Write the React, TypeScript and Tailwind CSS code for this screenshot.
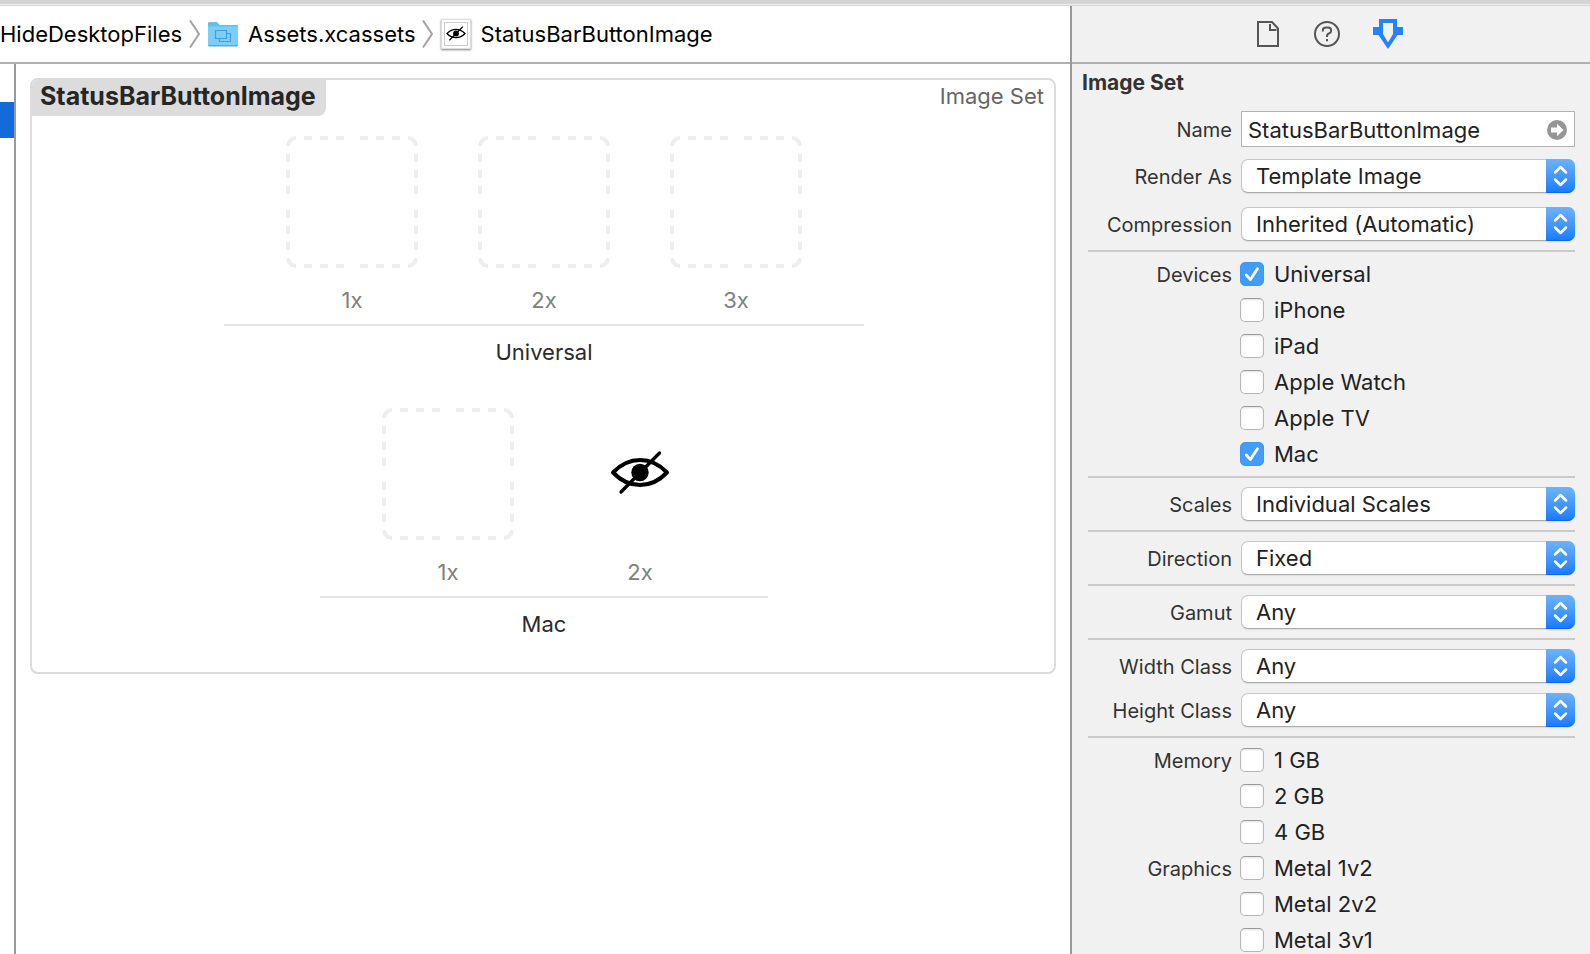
import { Fragment, useId, type ReactNode } from "react";

function PathChevron() {
  return (
    <svg width="12" height="28" viewBox="0 0 12 28" fill="none" stroke="#a3a3a3" strokeWidth="2" aria-hidden="true">
      <path d="M1 0.5L10 14L1 27.5" />
    </svg>
  );
}

function FolderIcon() {
  return (
    <svg width="30" height="26" viewBox="0 0 30 26" aria-hidden="true">
      <path d="M0 2.2Q0 1 1.2 1H9L11.5 4H29Q30 4 30 5V24H0Z" fill="#62bfe9" />
      <path d="M0 5.5H30V24Q30 25 29 25H1Q0 25 0 24Z" fill="#7bcff5" />
      <path d="M0 24H30Q30 25.4 29 25.4H1Q0 25.4 0 24Z" fill="#5aa9cf" />
      <g fill="none" stroke="#3fa0dc" strokeWidth="1.2">
        <path d="M7.5 9.5H18.5V17.5H7.5Z" />
        <path d="M18.5 12.5H22.5V20.5H11.5V17.5" />
      </g>
    </svg>
  );
}

function HiddenEye({ width, height }: { width: number; height: number }) {
  return (
    <svg width={width} height={height} viewBox="0 0 60 48" fill="none" stroke="#000" role="img" aria-label="Hidden eye">
      <path d="M3 22.5C12 13 21 10 30 10S48 13 57 22.5C48 32 39 35 30 35S12 32 3 22.5Z" strokeWidth="4" strokeLinejoin="round" />
      <circle cx="30" cy="22.5" r="8.7" fill="#000" stroke="none" />
      <path d="M11 42L49.5 3" strokeWidth="3.3" strokeLinecap="round" />
    </svg>
  );
}

const DASHES = [18, 34, 50, 74, 90, 106];

function EmptySlot() {
  return (
    <svg width="132" height="132" viewBox="0 0 132 132" fill="none" stroke="#eeeeee" strokeWidth="4" aria-hidden="true">
      <path d="M2 10A8 8 0 0 1 10 2M122 2A8 8 0 0 1 130 10M130 122A8 8 0 0 1 122 130M10 130A8 8 0 0 1 2 122" />
      {DASHES.map((d) => (
        <path key={d} d={`M${d} 2h8M${d} 130h8M2 ${d}v8M130 ${d}v8`} />
      ))}
    </svg>
  );
}

function SlotGroup({ name, slots }: { name: string; slots: { scale: string; filled?: boolean }[] }) {
  return (
    <section className="flex flex-col items-center">
      <div className="flex border-b-2 border-[#e4e4e4] px-8 pb-[10px]">
        {slots.map((slot) => (
          <figure key={slot.scale} className="flex w-48 flex-col items-center gap-[18px]">
            <div className="flex size-[132px] items-center justify-center">
              {slot.filled ? <HiddenEye width={60} height={48} /> : <EmptySlot />}
            </div>
            <figcaption className="h-7 leading-7 text-[#808080]">{slot.scale}</figcaption>
          </figure>
        ))}
      </div>
      <h2 className="mt-3 h-7 leading-7 text-[#2b2b2b]">{name}</h2>
    </section>
  );
}

function Divider() {
  return <hr className="my-[9px] border-t-2 border-[#cacaca]" />;
}

function FieldRow({ label, id, children }: { label: string; id: string; children: ReactNode }) {
  return (
    <div className="flex items-center gap-[9px]">
      <label htmlFor={id} className="w-36 shrink-0 pt-px text-right text-xl leading-6 text-[#333]">
        {label}
      </label>
      <div className="relative min-w-0 flex-1">{children}</div>
    </div>
  );
}

function SelectRow({ label, value }: { label: string; value: string }) {
  const id = useId();
  return (
    <FieldRow label={label} id={id}>
      <select
        id={id}
        defaultValue={value}
        className="block h-[34px] w-full appearance-none rounded-[7px] border border-[#c6c6c6] border-b-[#ababab] bg-white pr-8 pl-[14px] leading-8 text-[#222] shadow-[0_1px_1px_rgba(0,0,0,0.08)]"
      >
        <option>{value}</option>
      </select>
      <span className="pointer-events-none absolute inset-y-0 right-0 flex w-[29px] items-center justify-center rounded-r-[7px] border-b border-[#1166ee] bg-linear-to-b from-[#6db3f8] to-[#157cfc]">
        <svg width="15" height="22" viewBox="0 0 15 22" fill="none" stroke="#fff" strokeWidth="2.5" strokeLinecap="round" strokeLinejoin="round" aria-hidden="true">
          <path d="M2 7.5L7.5 2L13 7.500M2 14.500L7.500 20L13 14.500" />
        </svg>
      </span>
    </FieldRow>
  );
}

function CheckGroup({ label, options, checked = [] }: { label: string; options: string[]; checked?: string[] }) {
  return (
    <div role="group" aria-label={label} className="flex gap-2">
      <span className="w-36 shrink-0 pt-px text-right text-xl leading-6 text-[#333]">{label}</span>
      <div className="flex flex-col gap-3">
        {options.map((option) => (
          <label key={option} className="flex h-6 items-center gap-[10px] leading-6 text-[#222]">
            <span className="relative flex size-6">
              <input
                type="checkbox"
                defaultChecked={checked.includes(option)}
                className="peer size-6 appearance-none rounded-[5px] border border-[#b5b5b5] border-t-[#999] bg-white shadow-[inset_0_1px_2px_rgba(0,0,0,0.12)] checked:border-[#3b97f8] checked:bg-[#419cfb] checked:shadow-none"
              />
              <svg className="pointer-events-none absolute inset-0 hidden peer-checked:block" width="24" height="24" viewBox="0 0 24 24" fill="none" stroke="#fff" strokeWidth="2.8" strokeLinecap="round" strokeLinejoin="round" aria-hidden="true">
                <path d="M6.2 13L10.4 17.5L17.5 6.8" />
              </svg>
            </span>
            {option}
          </label>
        ))}
      </div>
    </div>
  );
}

const SINGLE_SELECTS = [
  { label: "Scales", value: "Individual Scales" },
  { label: "Direction", value: "Fixed" },
  { label: "Gamut", value: "Any" },
];

function Inspector() {
  return (
    <aside className="flex w-[520px] shrink-0 flex-col border-l-2 border-[#999] bg-[#f1f1f1]">
      <div className="flex h-[58px] items-center justify-center gap-[33px] border-b-2 border-[#b0b0b0] pr-1">
        <button type="button" aria-label="File inspector">
          <svg width="26" height="28" viewBox="-1 0 26 28" fill="none" stroke="#555" strokeWidth="2">
            <path d="M2 2H16L22 8.5V26H2Z" />
            <path d="M14 4V10H20.500" />
          </svg>
        </button>
        <button type="button" aria-label="Quick help">
          <svg width="26" height="28" viewBox="1 0 26 28" fill="none" stroke="#555" strokeWidth="2">
            <circle cx="14" cy="14" r="12" />
            <path d="M9.8 11.5V10.5Q9.8 7.5 13.2 7.5H14.8Q18.2 7.5 18.2 10.5Q18.2 12.5 16.2 13.3Q14 14.1 14 16.5V17" />
            <path d="M14 19V21.2" />
          </svg>
        </button>
        <button type="button" aria-label="Attributes inspector" aria-pressed="true">
          <svg width="30" height="30" viewBox="0 0 30 30">
            <path fillRule="evenodd" fill="#2284fc" d="M6 0H24V8H30V16H24.5L15 30L5.5 16H0V8H6ZM10 4V15L15 23.5L20 15V4Z" />
          </svg>
        </button>
      </div>
      <form className="pr-[15px] pb-[2px] pl-4">
        <h2 className="-ml-[6px] pt-[5px] pb-[14px] text-[21px] leading-7 font-bold text-[#333]">Image Set</h2>
        <FieldRow label="Name" id="asset-name">
          <input
            id="asset-name"
            type="text"
            defaultValue="StatusBarButtonImage"
            className="block h-9 w-full border border-[#b3b3b3] bg-white pt-[2px] pr-9 pl-[6px] leading-8 text-[#222] outline-none"
          />
          <button type="button" aria-label="Reveal asset" className="absolute top-2 right-2">
            <svg width="20" height="22" viewBox="0 0 20 22">
              <circle cx="10" cy="11" r="10" fill="#959595" />
              <path d="M4 8.5H10V4.8L16.5 11L10 17.2V13.5H4Z" fill="#fff" />
            </svg>
          </button>
        </FieldRow>
        <div className="mt-3 flex flex-col gap-[14px]">
          <SelectRow label="Render As" value="Template Image" />
          <SelectRow label="Compression" value="Inherited (Automatic)" />
        </div>
        <Divider />
        <div className="py-px">
          <CheckGroup
            label="Devices"
            options={["Universal", "iPhone", "iPad", "Apple Watch", "Apple TV", "Mac"]}
            checked={["Universal", "Mac"]}
          />
        </div>
        <Divider />
        {SINGLE_SELECTS.map((s) => (
          <Fragment key={s.label}>
            <SelectRow label={s.label} value={s.value} />
            <Divider />
          </Fragment>
        ))}
        <div className="flex flex-col gap-[10px]">
          <SelectRow label="Width Class" value="Any" />
          <SelectRow label="Height Class" value="Any" />
        </div>
        <Divider />
        <div className="flex flex-col gap-3 pt-px">
          <CheckGroup label="Memory" options={["1 GB", "2 GB", "4 GB"]} />
          <CheckGroup label="Graphics" options={["Metal 1v2", "Metal 2v2", "Metal 3v1"]} />
        </div>
      </form>
    </aside>
  );
}

export default function App() {
  return (
    <div className="flex min-h-screen flex-col bg-white font-[Inter,Roboto,sans-serif] text-[22px] [font-feature-settings:'calt'_0]">
      <div className="h-[6px] border-b border-[#d4d4d4] bg-[#f1f1f1]">
        <div className="h-1 bg-[#d4d4d4]" />
      </div>
      <div className="flex flex-1">
        <div className="flex min-w-0 flex-1 flex-col">
          <nav aria-label="Asset path" className="flex h-[58px] items-center border-b-2 border-[#b0b0b0] text-black">
            <a href="#project">HideDesktopFiles</a>
            <span className="mx-[7px]"><PathChevron /></span>
            <a href="#assets" className="flex items-center gap-[10px]">
              <FolderIcon />
              Assets.xcassets
            </a>
            <span className="mr-[7px] ml-[6px]"><PathChevron /></span>
            <a href="#image" className="flex items-center gap-[10px]">
              <span className="flex size-[30px] items-center justify-center border border-[#ddd] bg-white shadow-[0_1px_2px_rgba(0,0,0,0.5)]">
                <span className="flex size-6 items-center justify-center border border-[#ccc]">
                  <HiddenEye width={20} height={16} />
                </span>
              </span>
              StatusBarButtonImage
            </a>
          </nav>
          <div className="flex flex-1">
            <div className="w-4 shrink-0 border-r-2 border-[#999] pt-[38px]">
              <div className="h-9 bg-[#126bd8]" />
            </div>
            <main className="min-w-0 flex-1 p-[14px]">
              <article className="overflow-hidden rounded-lg border-2 border-[#dcdcdc] pb-[34px]">
                <header className="-mt-[2px] -ml-[2px] flex items-start justify-between">
                  <h1 className="h-[38px] rounded-br-lg bg-[#dcdcdc] px-[10px] text-[25px] leading-9 font-bold text-[#262626]">
                    StatusBarButtonImage
                  </h1>
                  <p className="pr-[10px] leading-9 text-[#666]">Image Set</p>
                </header>
                <div className="mt-5 flex flex-col gap-[42px] pl-[2px]">
                  <SlotGroup name="Universal" slots={[{ scale: "1x" }, { scale: "2x" }, { scale: "3x" }]} />
                  <SlotGroup name="Mac" slots={[{ scale: "1x" }, { scale: "2x", filled: true }]} />
                </div>
              </article>
            </main>
          </div>
        </div>
        <Inspector />
      </div>
    </div>
  );
}
